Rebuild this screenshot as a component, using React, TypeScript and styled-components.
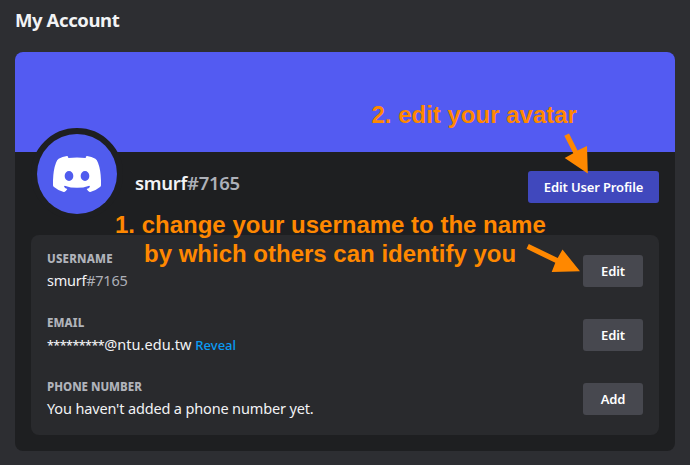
import React from "react";
import styled, { createGlobalStyle } from "styled-components";

const GlobalStyle = createGlobalStyle`
  *, *::before, *::after { box-sizing: border-box; }
  html, body { margin: 0; background: #2d2e32; }
  body {
    font-family: "Noto Sans", "Open Sans", sans-serif;
    color: #f2f3f5;
    overflow: hidden;
  }
`;

const Page = styled.main`
  position: relative;
  width: 690px;
  height: 465px;
  padding: 8px 15px 14px;
  background: #2d2e32;
`;

const Title = styled.h1`
  margin: 0 0 20px;
  font-size: 18.5px;
  line-height: 24px;
  font-weight: 700;
  letter-spacing: -0.4px;
  white-space: nowrap;
`;

const Card = styled.section`
  height: 399px;
  border-radius: 8px;
  background: #1e1f21;
  overflow: hidden;
`;

const Banner = styled.div`
  height: 100px;
  background: #535bf2;
`;

const Profile = styled.div`
  display: flex;
  align-items: flex-start;
  height: 83px;
  padding: 0 16px;
`;

const Avatar = styled.div`
  display: flex;
  align-items: center;
  justify-content: center;
  flex: none;
  width: 92px;
  height: 92px;
  margin: -24px 12px 0 0;
  border: 6px solid #1e1f21;
  border-radius: 50%;
  background: #1e1f21;
`;

const AvatarDisc = styled.div`
  display: flex;
  align-items: center;
  justify-content: center;
  flex: none;
  width: 80px;
  height: 80px;
  border-radius: 50%;
  background: #505cee;
  color: #fff;
`;

const DisplayName = styled.div`
  flex: 1;
  margin-top: 19px;
  font-size: 18.5px;
  line-height: 24px;
  font-weight: 650;
  letter-spacing: -0.3px;
  white-space: nowrap;
`;

const Tag = styled.span`
  color: #adb0b8;
`;

const Button = styled.button<{ $primary?: boolean }>`
  flex: none;
  width: ${(p) => (p.$primary ? 131 : 60)}px;
  height: 32px;
  margin-top: ${(p) => (p.$primary ? 19 : 4)}px;
  padding: 0;
  border: 0;
  border-radius: 3px;
  background: ${(p) => (p.$primary ? "#4048bd" : "#47484f")};
  color: #fff;
  font: 560 13px/32px "Noto Sans", "Open Sans", sans-serif;
  letter-spacing: -0.14px;
  white-space: nowrap;
`;

const Fields = styled.div`
  display: flex;
  flex-direction: column;
  gap: 24px;
  height: 200px;
  margin: 0 16px;
  padding: 16px;
  border-radius: 8px;
  background: #292a2d;
`;

const Field = styled.div`
  display: flex;
  justify-content: space-between;
  height: 40px;
`;

const Label = styled.h2<{ $spacing: number }>`
  margin: 0 0 3px;
  color: #b0b3ba;
  font-size: 11.5px;
  line-height: 16px;
  font-weight: 800;
  letter-spacing: ${(p) => p.$spacing}px;
  text-transform: uppercase;
`;

const Value = styled.div<{ $spacing: number }>`
  font-size: 14.5px;
  line-height: 20px;
  letter-spacing: ${(p) => p.$spacing}px;
  white-space: nowrap;
`;

const Mask = styled.span`
  font-size: 12.5px;
  font-weight: 500;
  letter-spacing: -0.5px;
`;

const Reveal = styled.a`
  margin-left: 4px;
  color: #0a9cf5;
  font-size: 13px;
  font-weight: 500;
  letter-spacing: 0;
`;

const Note = styled.p<{ $x: number; $y: number }>`
  position: absolute;
  left: ${(p) => p.$x}px;
  top: ${(p) => p.$y}px;
  margin: 0;
  color: #ff8800;
  font: 700 24px/29px "Liberation Sans", Arial, sans-serif;
  white-space: nowrap;
`;

const Arrows = styled.svg`
  position: absolute;
  inset: 0;
  pointer-events: none;
`;

function DiscordFace() {
  return (
    <svg width="48" height="36" viewBox="12 18 144 108" fill="currentColor">
      <path
        fillRule="evenodd"
        d="M54 18Q58 18 58 24Q84 21 110 24Q110 18 114 18Q128 20 139 26Q144 29 147 38Q157 64 156 106Q156 109 153 111Q140 122 124 126Q119 127 113 117Q120 115 123 110L121 107Q84 120 47 107L45 110Q49 115 55 117Q49 127 44 126Q28 122 15 111Q12 109 12 106Q11 64 21 38Q24 29 29 26Q40 20 54 18ZM60 63A13 15 0 1 0 60 93A13 15 0 1 0 60 63ZM108 63A13 15 0 1 0 108 93A13 15 0 1 0 108 63Z"
      />
    </svg>
  );
}

export default function App() {
  return (
    <Page>
      <GlobalStyle />
      <Title>My Account</Title>
      <Card>
        <Banner />
        <Profile>
          <Avatar>
            <AvatarDisc>
              <DiscordFace />
            </AvatarDisc>
          </Avatar>
          <DisplayName>
            smurf<Tag>#7165</Tag>
          </DisplayName>
          <Button $primary>Edit User Profile</Button>
        </Profile>
        <Fields>
          <Field>
            <div>
              <Label $spacing={0.2}>Username</Label>
              <Value $spacing={-0.25}>
                smurf<Tag>#7165</Tag>
              </Value>
            </div>
            <Button>Edit</Button>
          </Field>
          <Field>
            <div>
              <Label $spacing={0.1}>Email</Label>
              <Value $spacing={0.05}>
                <Mask>*********</Mask>@ntu.edu.tw<Reveal>Reveal</Reveal>
              </Value>
            </div>
            <Button>Edit</Button>
          </Field>
          <Field>
            <div>
              <Label $spacing={0}>Phone Number</Label>
              <Value $spacing={-0.15}>You haven't added a phone number yet.</Value>
            </div>
            <Button>Add</Button>
          </Field>
        </Fields>
      </Card>
      <Note $x={371.5} $y={100}>2. edit your avatar</Note>
      <Note $x={115} $y={210}>1. change your username to the name</Note>
      <Note $x={144} $y={239}>by which others can identify you</Note>
      <Arrows width="690" height="465" viewBox="0 0 690 465" fill="#ff8800">
        <path d="M564.3 135.8 569 133.5 577.5 150.5 587 146 587.8 173.5 564.7 158 573.3 153.3Z" />
        <path d="M528.8 244 526.5 248.8 555.3 262.8 551.7 272 580 271.3 562.5 249.5 557.7 258Z" />
      </Arrows>
    </Page>
  );
}
